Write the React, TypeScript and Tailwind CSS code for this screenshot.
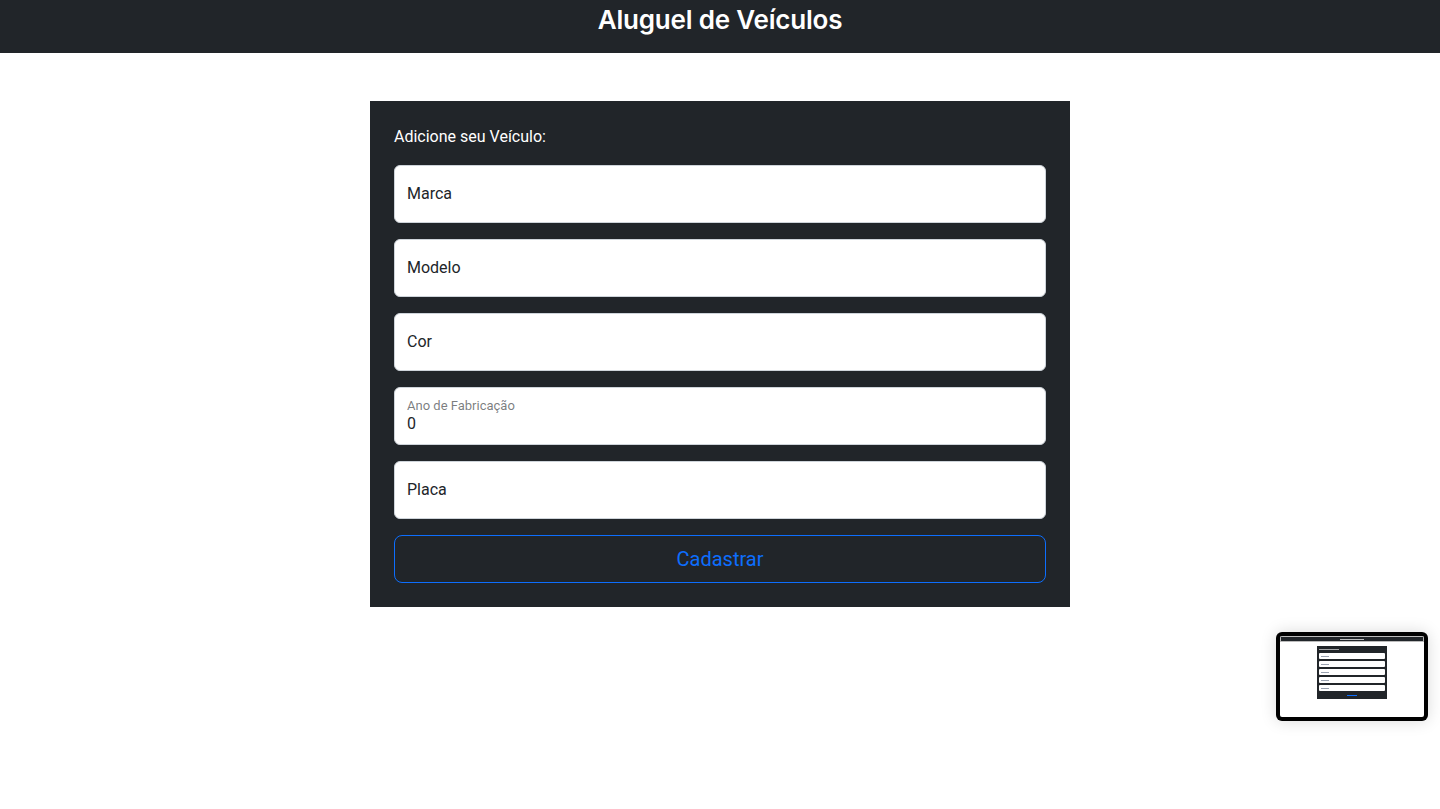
import React from 'react';

const fields = ['Marca', 'Modelo', 'Cor'];

function MiniPreview() {
  // Small thumbnail of the page, bottom right
  return (
    <div className="absolute right-[12px] top-[632px] w-[152px] h-[89px] rounded-[6px] bg-black p-[4px] shadow-[0_0_16px_rgba(0,0,0,0.15)]">
      <div className="w-full h-full bg-white rounded-[2px] overflow-hidden flex flex-col items-center">
        <div className="w-full h-[6px] bg-[#212529] border border-[#bbb] flex items-center justify-center">
          <div className="w-[24px] h-[1px] bg-white/70" />
        </div>
        <div className="mt-[4px] w-[70px] bg-[#212529] px-[2px] pt-[3px] pb-[2px] flex flex-col gap-[2px]">
          <div className="w-[20px] h-[1px] bg-white/60 mb-[1px]" />
          {[0, 1, 2, 3, 4].map((i) => (
            <div key={i} className="h-[6px] bg-white rounded-[1px] flex items-center pl-[2px]">
              <div className="w-[8px] h-[1px] bg-gray-400" />
            </div>
          ))}
          <div className="h-[4px] flex items-center justify-center">
            <div className="w-[10px] h-[1px] bg-[#0d6efd]" />
          </div>
        </div>
      </div>
    </div>
  );
}

export default function App() {
  return (
    <div className="relative min-h-[809px] bg-white font-['Roboto','Liberation_Sans',sans-serif] text-[#212529]">
      <header className="h-[53px] bg-[#212529] flex justify-center">
        <h1 className="font-['Inter',sans-serif] text-white text-[26px] font-semibold leading-[40px] tracking-[-0.2px]">Aluguel de Veículos</h1>
      </header>

      <div className="mt-[48px] mx-auto w-[700px] bg-[#212529] p-6">
        <p className="text-white text-[16px] leading-6 mb-4">Adicione seu Veículo:</p>
        <div className="flex flex-col gap-4">
          {fields.map((f) => (
            <div key={f} className="h-[58px] bg-white border border-[#ced4da] rounded-[6px] flex items-center px-3 text-[16px]">
              {f}
            </div>
          ))}
          <div className="h-[58px] bg-white border border-[#ced4da] rounded-[6px] flex flex-col justify-center px-3">
            <span className="text-[13px] leading-4 text-[#212529]/60">Ano de Fabricação</span>
            <span className="text-[16px] leading-5">0</span>
          </div>
          <div className="h-[58px] bg-white border border-[#ced4da] rounded-[6px] flex items-center px-3 text-[16px]">
            Placa
          </div>
          <button className="h-[48px] border border-[#0d6efd] rounded-[8px] text-[#0d6efd] text-[20px]">
            Cadastrar
          </button>
        </div>
      </div>

      <MiniPreview />
    </div>
  );
}
